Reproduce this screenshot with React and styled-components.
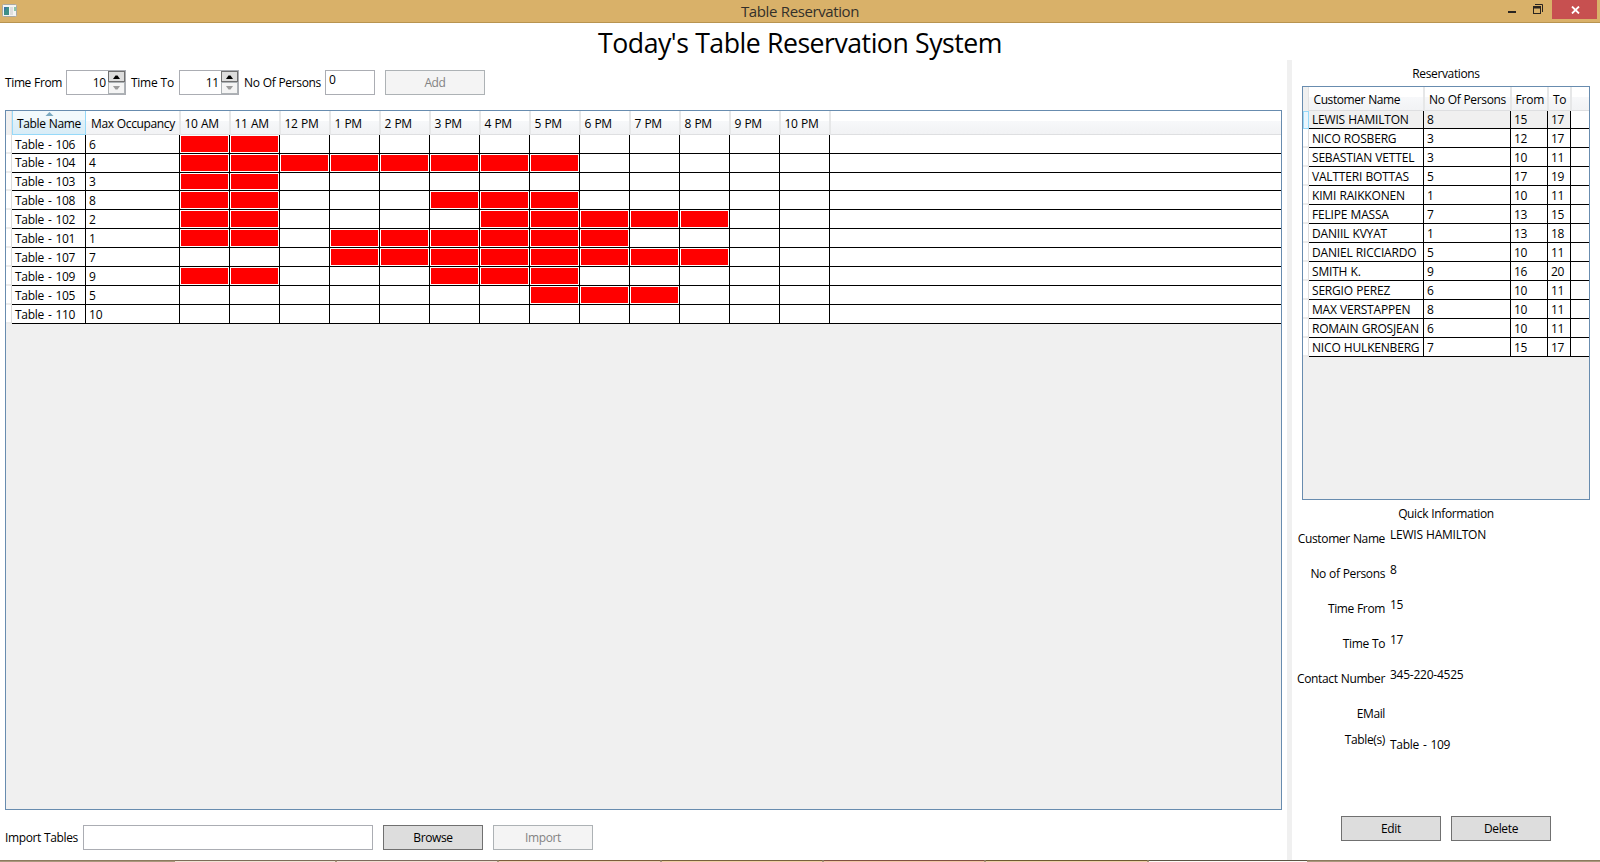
import React from "react";
import styled, { createGlobalStyle } from "styled-components";

const Global = createGlobalStyle`
  * { box-sizing: border-box; }
  html, body { margin: 0; padding: 0; background: #fff; overflow: hidden; }
  body {
    font-family: "Open Sans", "Noto Sans", sans-serif;
    font-size: 12px;
    line-height: 18px;
    color: #000;
    letter-spacing: -0.36px;
    word-spacing: 0.4px;
    white-space: pre;
  }
`;

const Window = styled.div`
  width: 1600px;
  height: 862px;
  display: flex;
  flex-direction: column;
  overflow: hidden;
`;

const TitleBar = styled.header`
  height: 23px;
  flex: none;
  display: grid;
  grid-template-columns: 1fr auto 1fr;
  background: #d9b169;
  border-bottom: 1px solid #b89450;
`;

const AppIcon = styled.svg`
  display: block;
  margin: 4px 0 0 2px;
`;

const WindowTitle = styled.div`
  font-size: 15px;
  line-height: 22px;
  letter-spacing: -0.4px;
  color: #33302a;
`;

const WindowButtons = styled.div`
  display: flex;
  justify-content: flex-end;
  align-items: flex-start;
  padding-right: 3px;
`;

const Glyph = styled.svg`
  display: block;
  margin-right: ${(p) => p.$gap}px;
`;

const CloseButton = styled.div`
  width: 45px;
  height: 19px;
  padding-left: 1px;
  background: #c75050;
  display: flex;
  align-items: center;
  justify-content: center;
`;

const Heading = styled.h1`
  margin: 0;
  height: 37px;
  flex: none;
  text-align: center;
  font-weight: 400;
  font-size: 26.67px;
  line-height: 40px;
  letter-spacing: -0.49px;
  word-spacing: 0.3px;
`;

const Body = styled.main`
  height: 800px;
  flex: none;
  display: flex;
`;

const Main = styled.section`
  width: 1287px;
  padding: 10px 5px 0;
  display: flex;
  flex-direction: column;
`;

const Splitter = styled.div`
  width: 5px;
  background: #f0f0f0;
`;

const Side = styled.aside`
  width: 308px;
  padding: 5px 10px 0 10px;
  display: flex;
  flex-direction: column;
`;

const Toolbar = styled.div`
  display: flex;
  height: 25px;
  line-height: 26px;
  flex: none;
`;

const Caption = styled.label`
  width: ${(p) => p.$width}px;
  flex: none;
  letter-spacing: ${(p) => p.$ls ?? -0.38}px;
`;

const Spinner = styled.div`
  width: 60px;
  height: 25px;
  margin-right: 5px;
  display: flex;
  border: 1px solid #abadb3;
`;

const SpinValue = styled.div`
  flex: 1;
  line-height: 24px;
  text-align: right;
  padding-right: 2px;
  letter-spacing: -0.2px;
`;

const SpinButtons = styled.div`
  width: 17px;
  display: flex;
  flex-direction: column;
`;

const SpinButton = styled.div`
  flex: ${(p) => (p.$off ? "1" : "0 0 11px")};
  display: flex;
  align-items: center;
  justify-content: center;
  border: 1px solid ${(p) => (p.$off ? "#adb2b5" : "#707070")};
  background: ${(p) => (p.$off ? "#f4f4f4" : "#ddd")};
`;

const TextBox = styled.div`
  width: ${(p) => p.$width}px;
  height: 25px;
  flex: none;
  padding: 0 3px;
  line-height: 18px;
  border: 1px solid #abadb3;
`;

const Button = styled.button`
  width: 100px;
  height: 25px;
  margin-left: 10px;
  padding: 0;
  font: inherit;
  letter-spacing: inherit;
  line-height: 22px;
  color: #000;
  background: #ddd;
  border: 1px solid #707070;
  border-radius: 0;
  &:disabled {
    color: #838383;
    background: #f4f4f4;
    border-color: #adb2b5;
  }
`;

const GridBox = styled.div`
  height: ${(p) => p.$height}px;
  margin-top: ${(p) => p.$top}px;
  flex: none;
  border: 1px solid #688caf;
  background: #f0f0f0;
`;

const HeaderRow = styled.div`
  display: flex;
  height: 24px;
  background: linear-gradient(#fff 0 40%, #f7f8fa 40%, #f1f2f4);
`;

const HeaderStub = styled.div`
  width: 6px;
  flex: none;
  background: #f0f0f0;
  border-right: 1px solid #e2e2e2;
`;

const HeaderCell = styled.div`
  position: relative;
  width: ${(p) => p.$width}px;
  flex: none;
  padding: 4px 0 0 ${(p) => p.$pad ?? 5}px;
  border-right: 2px solid #e6e7e8;
  border-bottom: 1px solid #dedfe1;
  letter-spacing: ${(p) => p.$ls ?? -0.36}px;
  ${(p) =>
    p.$sorted &&
    `
    border: 1px solid #96d9f9;
    border-top: 0;
    background: linear-gradient(#f2f9fc 0 40%, #e1f1f9 40%, #d8ecf6);
  `}
`;

const HeaderFill = styled.div`
  flex: 1;
  border-bottom: 1px solid #dedfe1;
`;

const SortArrow = styled.svg`
  position: absolute;
  top: 1px;
  left: 32px;
`;

const Row = styled.div`
  display: flex;
  height: ${(p) => p.$height}px;
`;

const RowStub = styled.div`
  width: 6px;
  flex: none;
  background: #fff;
  border-right: 1px solid #dcdcdc;
  border-bottom: 2px solid #ececec;
  ${(p) => p.$hot && "background: #eaf6fd; border: 1px solid #96d9f9;"}
`;

const Cell = styled.div`
  width: ${(p) => p.$width}px;
  flex: none;
  padding: ${(p) => p.$top ?? 1}px 0 0 3px;
  background: ${(p) => (p.$selected ? "#f0f0f0" : "#fff")};
  border-right: 1px solid #000;
  border-bottom: 1px solid #000;
  letter-spacing: ${(p) => p.$ls ?? -0.19}px;
`;

const TableCell = styled(Cell)`
  letter-spacing: -0.3px;
  word-spacing: 1.2px;
`;

const Slot = styled.div`
  width: 50px;
  flex: none;
  background: ${(p) => (p.$busy ? "#f00" : "#fff")};
  box-shadow: inset 0 0 0 1px #fff;
  border-right: 1px solid #000;
  border-bottom: 1px solid #000;
`;

const CellFill = styled.div`
  flex: 1;
  background: #fff;
  border-bottom: 1px solid #000;
`;

const SideTitle = styled.div`
  text-align: center;
  height: 16px;
  flex: none;
`;

const QuickTitle = styled(SideTitle)`
  margin: 5px 0;
`;

const GridSpacer = styled.div`
  height: 15px;
  flex: none;
`;

const Details = styled.dl`
  margin: 0 0 0 -8px;
  display: grid;
  grid-template-columns: 91px 1fr;
  column-gap: 5px;
`;

const Term = styled.dt`
  height: ${(p) => p.$height ?? 35}px;
  text-align: right;
  padding-top: 4px;
  letter-spacing: -0.37px;
`;

const Value = styled.dd`
  margin: 0;
  padding-top: ${(p) => p.$top ?? 0}px;
  letter-spacing: -0.24px;
`;

const TableValue = styled(Value)`
  letter-spacing: -0.3px;
  word-spacing: 1.2px;
`;

const SideActions = styled.div`
  display: flex;
  margin: 54px 0 0 29px;
`;

const Taskbar = styled.footer`
  height: 2px;
  flex: none;
  display: flex;
  background: #a8977c;
  border-top: 1px solid #8c7a5e;
`;

const TaskItem = styled.div`
  width: ${(p) => p.$width}px;
  margin-left: ${(p) => p.$left ?? 2}px;
  background: ${(p) => p.$fill};
  box-shadow: 0 -1px 0 ${(p) => p.$edge};
`;

const HOURS = ["10 AM", "11 AM", "12 PM", "1 PM", "2 PM", "3 PM", "4 PM", "5 PM", "6 PM", "7 PM", "8 PM", "9 PM", "10 PM"];

const TABLES = [
  { id: 106, seats: 6, busy: [10, 11] },
  { id: 104, seats: 4, busy: [10, 11, 12, 13, 14, 15, 16, 17], top: 0 },
  { id: 103, seats: 3, busy: [10, 11], height: 18, top: 0 },
  { id: 108, seats: 8, busy: [10, 11, 15, 16, 17] },
  { id: 102, seats: 2, busy: [10, 11, 16, 17, 18, 19, 20] },
  { id: 101, seats: 1, busy: [10, 11, 13, 14, 15, 16, 17, 18] },
  { id: 107, seats: 7, busy: [13, 14, 15, 16, 17, 18, 19, 20] },
  { id: 109, seats: 9, busy: [10, 11, 15, 16, 17] },
  { id: 105, seats: 5, busy: [17, 18, 19] },
  { id: 110, seats: 10, busy: [] },
];

const RESERVATIONS = [
  ["LEWIS HAMILTON", 8, 15, 17],
  ["NICO ROSBERG", 3, 12, 17],
  ["SEBASTIAN VETTEL", 3, 10, 11],
  ["VALTTERI BOTTAS", 5, 17, 19],
  ["KIMI RAIKKONEN", 1, 10, 11],
  ["FELIPE MASSA", 7, 13, 15],
  ["DANIIL KVYAT", 1, 13, 18],
  ["DANIEL RICCIARDO", 5, 10, 11],
  ["SMITH K.", 9, 16, 20],
  ["SERGIO PEREZ", 6, 10, 11],
  ["MAX VERSTAPPEN", 8, 10, 11],
  ["ROMAIN GROSJEAN", 6, 10, 11],
  ["NICO HULKENBERG", 7, 15, 17],
];

const NUMBER_WIDTHS = [87, 37, 23];

function HourSpinner({ value }) {
  return (
    <Spinner>
      <SpinValue>{value}</SpinValue>
      <SpinButtons>
        <SpinButton>
          <svg width="7" height="4" viewBox="0 0 7 4"><path d="M0 4L2.5 0.5h2L7 4z" fill="#000" /></svg>
        </SpinButton>
        <SpinButton $off>
          <svg width="7" height="4" viewBox="0 0 7 4"><path d="M0 0h7L4.5 3.5h-2z" fill="#9c9c9c" /></svg>
        </SpinButton>
      </SpinButtons>
    </Spinner>
  );
}

function TableGrid() {
  return (
    <GridBox $height={700} $top={15}>
      <HeaderRow>
        <HeaderStub />
        <HeaderCell $width={74} $pad={4} $sorted>
          Table Name
          <SortArrow width="9" height="4" viewBox="0 0 9 4"><path d="M0.5 4L4.5 0l4 4z" fill="#7ba9c0" /></SortArrow>
        </HeaderCell>
        <HeaderCell $width={95}>Max Occupancy</HeaderCell>
        {HOURS.map((h) => (
          <HeaderCell key={h} $width={50} $pad={3.5} $ls={-0.25}>{h}</HeaderCell>
        ))}
        <HeaderFill />
      </HeaderRow>
      {TABLES.map((t) => (
        <Row key={t.id} $height={t.height ?? 19}>
          <RowStub />
          <TableCell $width={74} $top={t.top}>{`Table - ${t.id}`}</TableCell>
          <Cell $width={94} $top={t.top}>{t.seats}</Cell>
          {HOURS.map((h, i) => (
            <Slot key={h} $busy={t.busy.includes(i + 10)} />
          ))}
          <CellFill />
        </Row>
      ))}
    </GridBox>
  );
}

function ReservationGrid() {
  return (
    <GridBox $height={414} $top={5}>
      <HeaderRow>
        <HeaderStub />
        <HeaderCell $width={116} $pad={4.5} $ls={-0.41}>Customer Name</HeaderCell>
        <HeaderCell $width={87} $pad={4}>No Of Persons</HeaderCell>
        <HeaderCell $width={37} $pad={3.5} $ls={-0.2}>From</HeaderCell>
        <HeaderCell $width={23} $pad={4}>To</HeaderCell>
        <HeaderFill />
      </HeaderRow>
      {RESERVATIONS.map(([name, ...rest], i) => (
        <Row key={name} $height={i === 0 ? 18 : 19}>
          <RowStub $hot={i === 0} />
          <Cell $width={115} $top={i ? 1 : 0} $selected={i === 0}>{name}</Cell>
          {rest.map((v, c) => (
            <Cell key={c} $width={NUMBER_WIDTHS[c]} $top={i ? 1 : 0} $ls={-0.4} $selected={i === 0}>{v}</Cell>
          ))}
          <CellFill />
        </Row>
      ))}
    </GridBox>
  );
}

export default function App() {
  return (
    <Window>
      <Global />
      <TitleBar>
        <AppIcon width="16" height="14" viewBox="0 0 16 14">
          <rect x="0.5" y="0.5" width="14" height="12" rx="1" fill="#f4f4f2" stroke="#a9a9a4" />
          <rect x="2" y="3" width="5" height="8" fill="#3f8f86" />
          <path d="M2 3h3L2 8z" fill="#3a72a8" />
          <rect x="8" y="3" width="3" height="8" fill="#dedede" />
          <rect x="12" y="3" width="2" height="4" fill="#8cc5a8" />
        </AppIcon>
        <WindowTitle>Table Reservation</WindowTitle>
        <WindowButtons>
          <Glyph $gap={17} width="8" height="14" viewBox="0 0 8 14"><path d="M0 11h8v2H0z" fill="#2a2520" /></Glyph>
          <Glyph $gap={9} width="10" height="15" viewBox="0 0 10 15">
            <path d="M2 4.5h7.5V12" fill="none" stroke="#2a2520" />
            <path d="M0 6h8v8H0zM1 8.5V13h6V8.5z" fill="#2a2520" fillRule="evenodd" />
          </Glyph>
          <CloseButton>
            <svg width="9" height="8" viewBox="0 0 9 8"><path d="M1 0.5l7 7M8 0.5l-7 7" stroke="#fff" strokeWidth="1.8" /></svg>
          </CloseButton>
        </WindowButtons>
      </TitleBar>
      <Heading>Today's Table Reservation System</Heading>
      <Body>
        <Main>
          <Toolbar>
            <Caption $width={61}>Time From</Caption>
            <HourSpinner value={10} />
            <Caption $width={48} $ls={-0.28}>Time To</Caption>
            <HourSpinner value={11} />
            <Caption $width={81} $ls={-0.36}>No Of Persons</Caption>
            <TextBox $width={50}>0</TextBox>
            <Button disabled>Add</Button>
          </Toolbar>
          <TableGrid />
          <GridSpacer />
          <Toolbar>
            <Caption $width={78}>Import Tables</Caption>
            <TextBox $width={290} />
            <Button>Browse</Button>
            <Button disabled>Import</Button>
          </Toolbar>
        </Main>
        <Splitter />
        <Side>
          <SideTitle>Reservations</SideTitle>
          <ReservationGrid />
          <QuickTitle>Quick Information</QuickTitle>
          <Details>
            <Term>Customer Name</Term><Value>LEWIS HAMILTON</Value>
            <Term>No of Persons</Term><Value>8</Value>
            <Term>Time From</Term><Value>15</Value>
            <Term>Time To</Term><Value>17</Value>
            <Term>Contact Number</Term><Value>345-220-4525</Value>
            <Term $height={26}>EMail</Term><Value />
            <Term>Table(s)</Term><TableValue $top={9}>Table - 109</TableValue>
          </Details>
          <SideActions>
            <Button>Edit</Button>
            <Button>Delete</Button>
          </SideActions>
        </Side>
      </Body>
      <Taskbar>
        <TaskItem $left={175} $width={160} $fill="#efe3d4" $edge="#7d6c58" />
        <TaskItem $width={160} $fill="#efddd0" $edge="#7d6a5c" />
        <TaskItem $width={161} $fill="#edcdb4" $edge="#7c5c3a" />
        <TaskItem $width={160} $fill="#efcfa4" $edge="#78603c" />
        <TaskItem $width={160} $fill="#efc6a4" $edge="#805040" />
        <TaskItem $width={161} $fill="#ecd0a8" $edge="#6e5a30" />
        <TaskItem $width={158} $fill="#fdfaf6" $edge="#5c5444" />
      </Taskbar>
    </Window>
  );
}
